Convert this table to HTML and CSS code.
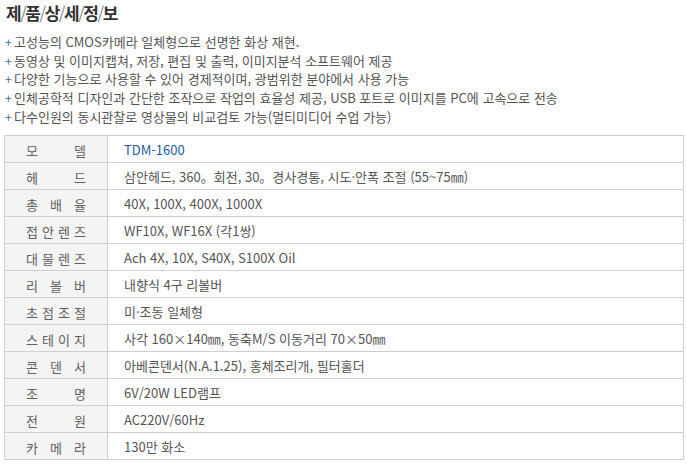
FILE: index.html
```html
<!DOCTYPE html>
<html lang="ko">
<head>
<meta charset="utf-8">
<link rel="stylesheet" href="styles.css">
</head>
<body>
<div class="page">
  <h1 class="title">제<i>/</i>품<i>/</i>상<i>/</i>세<i>/</i>정<i>/</i>보</h1>
  <ul class="features">
    <li>고성능의 CMOS카메라 일체형으로 선명한 화상 재현.</li>
    <li>동영상 및 이미지캡쳐, 저장, 편집 및 출력, 이미지분석 소프트웨어 제공</li>
    <li>다양한 기능으로 사용할 수 있어 경제적이며, 광범위한 분야에서 사용 가능</li>
    <li>인체공학적 디자인과 간단한 조작으로 작업의 효율성 제공, USB 포트로 이미지를 PC에 고속으로 전송</li>
    <li>다수인원의 동시관찰로 영상물의 비교검토 가능(멀티미디어 수업 가능)</li>
  </ul>
  <table class="spec">
    <tr><th><span class="lbl"><span>모</span><span>델</span></span></th><td class="model">TDM-1600</td></tr>
    <tr><th><span class="lbl"><span>헤</span><span>드</span></span></th><td>삼안헤드, 360。회전, 30。경사경통, 시도·안폭 조절 (55~75㎜)</td></tr>
    <tr><th><span class="lbl"><span>총</span><span>배</span><span>율</span></span></th><td>40X, 100X, 400X, 1000X</td></tr>
    <tr><th><span class="lbl"><span>접</span><span>안</span><span>렌</span><span>즈</span></span></th><td>WF10X, WF16X (각1쌍)</td></tr>
    <tr><th><span class="lbl"><span>대</span><span>물</span><span>렌</span><span>즈</span></span></th><td>Ach 4X, 10X, S40X, S100X Oil</td></tr>
    <tr><th><span class="lbl"><span>리</span><span>볼</span><span>버</span></span></th><td>내향식 4구 리볼버</td></tr>
    <tr><th><span class="lbl"><span>초</span><span>점</span><span>조</span><span>절</span></span></th><td>미·조동 일체형</td></tr>
    <tr><th><span class="lbl"><span>스</span><span>테</span><span>이</span><span>지</span></span></th><td>사각 160×140㎜, 동축M/S 이동거리 70×50㎜</td></tr>
    <tr><th><span class="lbl"><span>콘</span><span>덴</span><span>서</span></span></th><td>아베콘덴서(N.A.1.25), 홍체조리개, 필터홀더</td></tr>
    <tr><th><span class="lbl"><span>조</span><span>명</span></span></th><td>6V/20W LED램프</td></tr>
    <tr><th><span class="lbl"><span>전</span><span>원</span></span></th><td>AC220V/60Hz</td></tr>
    <tr><th><span class="lbl"><span>카</span><span>메</span><span>라</span></span></th><td>130만 화소</td></tr>
  </table>
</div>
</body>
</html>
```
FILE: styles.css
```css
html, body {
  margin: 0;
  padding: 0;
  background: #ffffff;
}
body {
  font-family: "Noto Sans CJK KR", "Noto Sans", sans-serif;
  font-size: 13px;
  color: #555555;
}
.page {
  padding: 0 4px 0 4px;
  width: 680px;
}
.title {
  margin: 0;
  padding: 1px 0 0 2px;
  height: 25px;
  font-size: 17px;
  line-height: 23px;
  font-weight: bold;
  color: #333333;
}
.title i {
  font-style: normal;
  font-weight: normal;
  color: #888888;
  margin: 0 -1.5px;
}
.features {
  list-style: none;
  margin: 7px 0 0 0;
  padding: 0;
}
.features li {
  line-height: 18.7px;
  height: 18.7px;
  padding-left: 10px;
  position: relative;
  white-space: nowrap;
  color: #555555;
}
.features li::before {
  content: "+";
  position: absolute;
  left: 1px;
  top: 0;
  color: #3b6ea8;
  font-size: 12px;
}
.spec {
  margin-top: 9px;
  border-collapse: collapse;
  width: 680px;
}
.spec th, .spec td {
  border: 1px solid #cfcfcf;
  height: 26px;
  padding: 0;
  font-weight: normal;
  color: #555555;
}
.spec th {
  width: 102px;
  background: #f4f4f4;
  text-align: center;
  color: #606060;
}
.spec td {
  padding-left: 16px;
  text-align: left;
}
.spec td.model {
  color: #1f5a9c;
}
.lbl {
  display: inline-flex;
  justify-content: space-between;
  width: 60px;
  vertical-align: middle;
}
```
